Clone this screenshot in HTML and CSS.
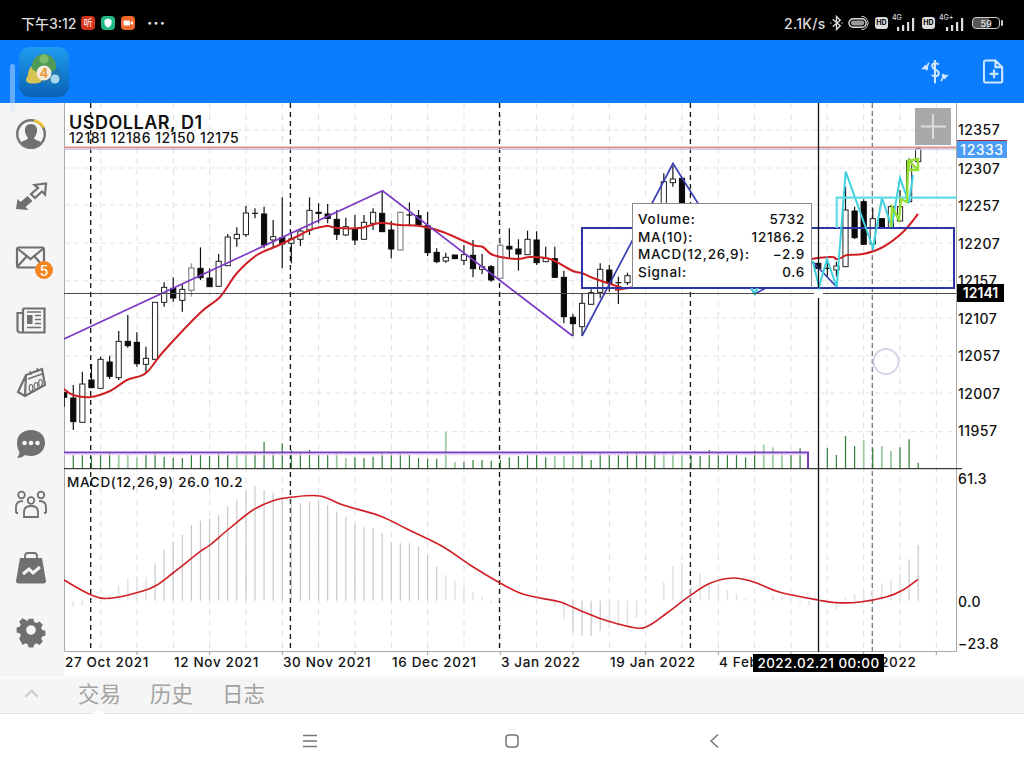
FILE: index.html
```html
<!DOCTYPE html>
<html lang="zh">
<head>
<meta charset="utf-8">
<title>USDOLLAR, D1</title>
<link rel="stylesheet" href="styles.css">
</head>
<body>
<div class="app">
  <header class="status">
    <div class="status-left">
      <span class="clock">下午3:12</span>
      <span class="app-dot dot-red">听</span>
      <span class="app-dot dot-green"><svg class="dot-glyph" viewBox="0 0 14 14"><path d="M7 2.500l3.500 1.500v3c0 2-1.500 3.500-3.500 4.500C5 10.500 3.500 9 3.500 7V4z"/></svg></span>
      <span class="app-dot dot-orange"><svg class="dot-glyph" viewBox="0 0 14 14"><rect x="2.500" y="4.500" width="6.500" height="5" rx="1"/><path d="M9.500 6.500l2.500-1.500v4l-2.500-1.500z"/></svg></span>
      <span class="more">···</span>
    </div>
    <div class="status-right">
      <span class="speed">2.1K/s</span>
      <svg class="st-bt" viewBox="0 0 14 16"><path class="st-line" d="M3 4l8 7-4 4V1l4 4-8 7M0.500 8h1M12.500 8h1"/></svg>
      <svg class="st-pill" viewBox="0 0 23 16"><rect class="st-line" x="1" y="3.500" width="18" height="9" rx="4.500"/><rect class="st-fill" x="3" y="5.500" width="14" height="5" rx="2.500"/><path class="st-thin" d="M14 1a7 7 0 0 1 0 14"/></svg>
      <span class="hd">HD</span>
      <span class="net"><span class="net-label">4G</span>
        <svg class="bars" viewBox="0 0 26 13"><rect x="6" y="9" width="2.200" height="4"/><rect x="11" y="7" width="2.200" height="6"/><rect x="16" y="4" width="2.200" height="9"/><rect x="21" y="0" width="2.200" height="13"/></svg></span>
      <span class="hd">HD</span>
      <span class="net net-wide"><span class="net-label">4G+</span>
        <svg class="bars" viewBox="0 0 30 13"><rect x="8" y="9" width="2.200" height="4"/><rect x="13" y="7" width="2.200" height="6"/><rect x="18" y="4" width="2.200" height="9"/><rect x="23" y="0" width="2.200" height="13"/></svg></span>
      <span class="battery"><span class="battery-val">59</span></span>
    </div>
  </header>

  <div class="toolbar">
    <svg class="logo" viewBox="0 0 50 50">
      <defs>
        <linearGradient id="logoBg" x1="0" y1="0" x2="0" y2="1"><stop offset="0" stop-color="#1e9bf0"/><stop offset="1" stop-color="#0a62b4"/></linearGradient>
      </defs>
      <rect width="50" height="50" rx="11" fill="url(#logoBg)"/>
      <path class="logo-blue" d="M30 18c7 0 12 5 12 11 0 5-5 8-11 8-5 0-9-2-11-5l6-12z"/>
      <circle class="logo-sky" cx="36" cy="32" r="4.500"/>
      <path class="logo-yellow" d="M19 16c-6 1-10 6-10 12-1 2-3 5-1 7 2 2 10 2 14 0l6-10z"/>
      <path class="logo-green" d="M25 7c8 0 13 7 12 15l-6 4H19l-6-4c-1-8 4-15 12-15z"/>
      <circle class="logo-lime" cx="25" cy="12" r="4.500"/>
      <circle class="logo-disc" cx="25" cy="26" r="7.500"/>
      <text class="logo-four" x="25" y="31">4</text>
    </svg>
    <div class="toolbar-actions">
      <svg class="tool-icon" viewBox="0 0 32 28">
        <path class="tool-line" d="M20 6c-2-2-7-2-7 1.500 0 4.500 7 3.500 7 8 0 3.500-5 3.700-7.500 1.700M16 1v25"/>
        <path class="tool-thin" d="M9.500 4c-2 2.500-2.500 4-2.500 8M22.500 24c2-2.500 2.500-4 2.500-8"/>
        <path class="tool-solid" d="M1 11l5-5 3 5zM31 17l-5 5-3-5z"/>
      </svg>
      <svg class="tool-icon doc" viewBox="0 0 22 26">
        <path class="tool-line" d="M2.500 1.500h10l7 7v14a2 2 0 0 1-2 2h-15a2 2 0 0 1-2-2v-19a2 2 0 0 1 2-2zM12.500 1.500v7h7M11 11v9M6.500 15.500h9"/>
      </svg>
    </div>
    <span class="scroll-ghost"></span>
  </div>

  <main class="main">
    <nav class="sidebar">
      <div class="side-cell"><svg class="side-icon" viewBox="0 0 36 36">
        <circle class="ic-ring" cx="18" cy="18" r="13.800"/><path class="ic-yellow" d="M21 4.500a14 14 0 0 1 9.500 7"/>
        <path class="ic-fill" d="M18 8c4.500 0 6.500 3.500 6 7.500-.4 3-1.800 5-3 6.500 0 1 2 2 5 3l2 1.500a13 13 0 0 1-20 0l2-1.500c3-1 5-2 5-3-1.200-1.500-2.600-3.500-3-6.500C11.500 11.500 13.500 8 18 8z"/></svg></div>
      <div class="side-cell"><svg class="side-icon" viewBox="0 0 36 36">
        <path class="ic-fill" d="M3 31l1.500-10 3 3 7-6 5 5-7 6 3 3z"/>
        <path class="ic-stroke" d="M18 16l7-6-3.500-3L33 5.500 32 16.500l-3-3-7 6.500z"/></svg></div>
      <div class="side-cell"><svg class="side-icon" viewBox="0 0 36 36">
        <rect class="ic-stroke" x="4" y="7.500" width="27" height="20" rx="2"/><path class="ic-stroke" d="M4.500 8.500L17.500 19 30.500 8.500M4.500 26.500l9-10M30.500 26.500l-9-10"/></svg>
        <span class="badge">5</span></div>
      <div class="side-cell"><svg class="side-icon" viewBox="0 0 36 36">
        <path class="ic-stroke" d="M10 6.500h21.500v24H7a2.500 2.500 0 0 1-2.500-2.500V11h5.500M10 6.500v24"/>
        <rect class="ic-fill" x="14" y="13" width="5.500" height="9"/><path class="ic-thin" d="M14 10h14M22 13.500h6M22 17.500h6M22 21.500h6M14 25.500h14"/></svg></div>
      <div class="side-cell"><svg class="side-icon" viewBox="0 0 36 36">
        <path class="ic-stroke" d="M5 28L13 11 29 5 32 21 12 32zM5 28l7 4M13 11l-1 21"/>
        <path class="ic-thin" d="M15 15l14-5"/>
        <ellipse class="ic-oval" cx="18" cy="24" rx="1.800" ry="3.500"/><ellipse class="ic-oval" cx="23" cy="22" rx="1.800" ry="3.500"/><ellipse class="ic-oval" cx="27.500" cy="19" rx="1.800" ry="3.500"/>
        <path class="ic-thin" d="M17 7l1 4M24 4l1 4"/></svg></div>
      <div class="side-cell"><svg class="side-icon" viewBox="0 0 36 36">
        <path class="ic-fill" d="M18 4c8 0 14 5 14 13 0 7-6 13-14 13-2 0-4-.3-6-1-2 2-4.500 3-8 3 1.500-2 2.500-4 2.500-6C5 24 4 21 4 17 4 9 10 4 18 4z"/>
        <circle class="ic-dot" cx="11.500" cy="17" r="2.300"/><circle class="ic-dot" cx="18" cy="17" r="2.300"/><circle class="ic-dot" cx="24.500" cy="17" r="2.300"/></svg></div>
      <div class="side-cell"><svg class="side-icon" viewBox="0 0 36 36">
        <circle class="ic-thin2" cx="8.500" cy="7" r="3.300"/><circle class="ic-thin2" cx="28" cy="7" r="3.300"/><circle class="ic-thin2" cx="18" cy="12.500" r="3.300"/>
        <path class="ic-thin2" d="M3 25v-6c0-4 2-6 7-6M33 25v-6c0-4-2-6-7-6M3 25h2M33 25h-2M11 29v-5c0-4 3-6 7-6s7 2 7 6v5z"/></svg></div>
      <div class="side-cell"><svg class="side-icon" viewBox="0 0 36 36">
        <path class="ic-thin2" d="M12 10V6c0-2 1-3 3-3h6c2 0 3 1 3 3v4M12 10v3M24 10v3"/>
        <path class="ic-fill" d="M7 8h22l4 23c.2 1.500-1 2.500-2.500 2.500h-25C4 33.500 2.800 32.500 3 31z"/>
        <path class="ic-white" d="M10 24l6-5 4 4 7-6"/></svg></div>
      <div class="side-cell"><svg class="side-icon" viewBox="0 0 36 36">
        <path class="ic-fill" fill-rule="evenodd" d="M15 4h6l1 4 3 1.300 3.600-2 4.200 4.200-2 3.500 1.200 3 4 1v6l-4 1-1.200 3 2 3.500-4.200 4.200-3.600-2-3 1.300-1 4h-6l-1-4-3-1.300-3.600 2L3.200 28.500l2-3.500-1.200-3-4-1v-6l4-1 1.200-3-2-3.500L7.400 3.300l3.600 2 3 1.300zM18 12a6 6 0 1 0 0 12 6 6 0 0 0 0-12z" transform="translate(3.600 3.600) scale(.8)"/></svg></div>
    </nav>

    <section class="chart">
      <svg class="plot" viewBox="64 103 960 573" width="960" height="573">
        <g id="grid"></g>
        <path class="sep" d="M64.500 103V651.500H956.500V103"/>
        <path class="sep-dark" d="M64 468.700H962"/>
        <g id="tick-marks"></g>
        <g id="volume"></g>
        <g id="histogram"></g>
        <g id="candles"></g>
        <path id="ma-line" class="ma"/>
        <polyline class="zig-purple" points="64,339 382.500,190.700 572.700,336"/>
        <polyline class="zig-blue" points="582,336 673,163.500 754.700,294 813,262 836.700,287"/>
        <rect class="box-blue" x="582" y="228" width="372" height="60"/>
        <polyline class="zig-cyan" points="751,287 754.700,294 758,287 813,262 819,287 827,259 836.700,287 845.700,171.700 873,248 882,198 891.700,227 900,178 909,203 913,175"/>
        <path class="box-cyan" d="M957 197.700H836.700V228"/>
        <path class="zig-green" d="M891 227L892 207 899 220 901 199 907 202 908 161 918 159 918 170 909 170 909 161 918 170"/>
        <path class="vol-box" d="M64 452.500H808V468"/>
        <path class="vol-box-glow" d="M64 454.500H806"/>
        <path id="macd-line" class="macd"/>
        <path class="ask-glow" d="M64 149.500H956"/>
        <path class="ask" d="M64 147.500H956"/>
        <path class="cross-h" d="M64 293.500H814M823 293.500H956"/>
        <path class="cross-v" d="M818.500 103V288M818.500 298V652"/>
        <circle class="touch" cx="886" cy="361.500" r="12.500"/>

        <text class="title" x="69" y="129">USDOLLAR, D1</text>
        <text class="ohlc" x="69" y="143">12181 12186 12150 12175</text>
        <text class="macd-label" x="67" y="487">MACD(12,26,9) 26.0 10.2</text>
        <text class="axis-y" x="958" y="135">12357</text>
        <text class="axis-y" x="958" y="174">12307</text>
        <text class="axis-y" x="958" y="211">12257</text>
        <text class="axis-y" x="958" y="249">12207</text>
        <text class="axis-y" x="958" y="286">12157</text>
        <text class="axis-y" x="958" y="324">12107</text>
        <text class="axis-y" x="958" y="361">12057</text>
        <text class="axis-y" x="958" y="399">12007</text>
        <text class="axis-y" x="958" y="436">11957</text>
        <text class="axis-y" x="958" y="484">61.3</text>
        <text class="axis-y" x="958" y="607">0.0</text>
        <text class="axis-y" x="958" y="649">−23.8</text>
        <text class="axis-x" x="65" y="667">27 Oct 2021</text>
        <text class="axis-x" x="174" y="667">12 Nov 2021</text>
        <text class="axis-x" x="283" y="667">30 Nov 2021</text>
        <text class="axis-x" x="392" y="667">16 Dec 2021</text>
        <text class="axis-x" x="501" y="667">3 Jan 2022</text>
        <text class="axis-x" x="610" y="667">19 Jan 2022</text>
        <text class="axis-x" x="719" y="667">4 Feb 2022</text>
        <text class="axis-x" x="828" y="667">22 Feb 2022</text>
      </svg>

      <div class="zoom-btn"><svg class="zoom-plus" viewBox="0 0 36 37"><path d="M18 6v25M6 18.500h25"/></svg></div>
      <div class="price-tag tag-ask">12333</div>
      <div class="price-tag tag-cross">12141</div>
      <div class="time-tag">2022.02.21 00:00</div>
      <div class="tooltip">
        <div class="tip-row"><span>Volume:</span><span>5732</span></div>
        <div class="tip-row"><span>MA(10):</span><span>12186.2</span></div>
        <div class="tip-row"><span>MACD(12,26,9):</span><span>−2.9</span></div>
        <div class="tip-row"><span>Signal:</span><span>0.6</span></div>
      </div>
    </section>
  </main>

  <div class="tabs">
    <svg class="chev" viewBox="0 0 16 9"><path d="M1.500 8L8 1.500 14.500 8"/></svg>
    <span class="tab">交易</span>
    <span class="tab">历史</span>
    <span class="tab">日志</span>
    <span class="tab-notch"></span>
  </div>

  <footer class="navbar">
    <svg class="nav-icon" viewBox="0 0 14 14"><path d="M0 1.500h14M0 7h14M0 12.500h14"/></svg>
    <svg class="nav-icon" viewBox="0 0 14 14"><rect x="1" y="1" width="12" height="12" rx="3"/></svg>
    <svg class="nav-icon" viewBox="0 0 14 14"><path d="M11 0.500L4 7l7 6.500"/></svg>
  </footer>
</div>
<script src="chart.js"></script>
</body>
</html>
```
FILE: styles.css
```css
* { box-sizing: border-box; }
html, body { margin: 0; padding: 0; }
body { width: 1024px; height: 768px; overflow: hidden; background: #fff; font-family: Inter, "Noto Sans CJK SC", sans-serif; }
.app { display: flex; flex-direction: column; width: 1024px; height: 768px; }

/* status bar */
.status { height: 40px; background: #000; display: flex; justify-content: space-between; align-items: center; padding: 6px 24px 0 21px; color: #ddd; }
.status-left, .status-right { display: flex; align-items: center; }
.clock { font: 500 14px Inter, "Noto Sans CJK SC", sans-serif; width: 60px; white-space: nowrap; }
.app-dot { width: 14px; height: 14px; border-radius: 4px; margin-right: 6px; font: 9px "Noto Sans CJK SC", sans-serif; color: #fff; text-align: center; line-height: 14px; }
.dot-red { background: #d8341c; }
.dot-green { background: #22b98a; }
.dot-orange { background: #f0692e; }
.dot-glyph { display: block; width: 14px; height: 14px; fill: #fff; }
.more { margin-left: 6px; font: 700 16px Inter, sans-serif; letter-spacing: 1px; color: #eee; }
.speed { width: 42px; margin-right: 4px; font: 500 14px Inter, sans-serif; letter-spacing: .3px; white-space: nowrap; }
.st-bt { width: 13px; height: 16px; margin-right: 5px; }
.st-pill { width: 22px; height: 16px; margin-right: 5px; }
.st-line { fill: none; stroke: #ddd; stroke-width: 1.500; }
.st-thin { fill: none; stroke: #ddd; stroke-width: 1; }
.st-fill { fill: #999; }
.hd { width: 13px; height: 12px; border-radius: 3px; background: #ddd; color: #000; font: 700 7px Inter, sans-serif; line-height: 12px; text-align: center; margin-right: 3px; }
.net { position: relative; width: 26px; height: 16px; display: flex; align-items: flex-end; justify-content: flex-end; margin-right: 5px; }
.net-wide { width: 30px; margin-right: 4px; }
.net-label { position: absolute; left: 1px; top: -2px; font: 500 7px Inter, sans-serif; color: #ddd; }
.bars { width: 26px; height: 13px; fill: #ddd; }
.net-wide .bars { width: 30px; }
.battery { width: 28px; height: 12px; border: 1px solid #ccc; border-radius: 4px; display: flex; align-items: center; justify-content: center; position: relative; background: linear-gradient(90deg, #555 60%, #000 60%); }
.battery::after { content: ""; position: absolute; right: -4px; top: 2px; width: 2px; height: 6px; background: #ccc; border-radius: 1px; }
.battery-val { font: 500 9px Inter, sans-serif; color: #eee; }

/* toolbar */
.toolbar { height: 63px; background: #0a7cff; display: flex; align-items: center; justify-content: space-between; padding: 0 19px; position: relative; flex: none; }
.logo { width: 50px; height: 50px; }
.logo-blue { fill: #1f78b4; }
.logo-sky { fill: #a6d8ee; }
.logo-yellow { fill: #d8c452; }
.logo-green { fill: #4f9a55; }
.logo-lime { fill: #7fbd6a; }
.logo-disc { fill: #f5eadf; }
.logo-four { font: 700 13px Inter, sans-serif; fill: #e89a3a; text-anchor: middle; }
.toolbar-actions { display: flex; align-items: center; gap: 33px; margin-right: 0; }
.tool-icon { width: 30px; height: 26px; }
.tool-icon.doc { width: 22px; height: 25px; }
.tool-line { fill: none; stroke: #cfe6ff; stroke-width: 2.200; }
.tool-thin { fill: none; stroke: #cfe6ff; stroke-width: 2; }
.tool-solid { fill: #cfe6ff; }
.scroll-ghost { position: absolute; left: 10px; top: 24px; width: 5px; height: 49px; border-radius: 3px; background: rgba(215, 230, 250, .45); }

/* main */
.main { height: 573px; display: flex; flex: none; }
.sidebar { width: 64px; background: #f5f5f5; flex: none; display: flex; flex-direction: column; }
.side-cell { height: 62px; display: flex; align-items: center; justify-content: center; position: relative; flex: none; padding-right: 2px; }
.side-icon { width: 36px; height: 36px; }
.ic-ring { fill: none; stroke: #777; stroke-width: 2.500; }
.ic-yellow { fill: none; stroke: #f4c534; stroke-width: 2.500; }
.ic-fill { fill: #707070; }
.ic-stroke { fill: none; stroke: #707070; stroke-width: 2.200; }
.ic-thin { fill: none; stroke: #707070; stroke-width: 1.500; }
.ic-thin2 { fill: none; stroke: #707070; stroke-width: 1.800; }
.ic-oval { fill: none; stroke: #707070; stroke-width: 1.200; }
.ic-dot { fill: #f5f5f5; }
.ic-white { fill: none; stroke: #f5f5f5; stroke-width: 3; }
.badge { position: absolute; left: 35px; top: 34px; width: 18px; height: 18px; border-radius: 50%; background: #f5841f; color: #fff; font: 500 14px Inter, sans-serif; line-height: 19px; text-align: center; }

/* chart */
.chart { position: relative; width: 960px; background: #fff; flex: none; overflow: hidden; }
.plot { display: block; }
.grid-line { stroke: #e4e4e4; stroke-width: 1; stroke-dasharray: 5 4; }
.grid-v { stroke: #e0e0e0; stroke-dasharray: 6 5; }
.period { stroke: #111; stroke-width: 1.300; stroke-dasharray: 5 4; }
.period-soft { stroke: #777; stroke-width: 1.300; stroke-dasharray: 5 3; }
.sep { fill: none; stroke: #aaa; stroke-width: 1; }
.sep-dark { stroke: #3c3c3c; stroke-width: 1.200; }
.tick { stroke: #9a9a9a; stroke-width: 1; }
.vol { stroke: #2f7f3a; stroke-width: 1.200; }
.vol-soft { stroke: #9ecba0; stroke-width: 1.800; }
.hist { stroke: #c8c8c8; stroke-width: 1.200; }
.hist-soft { stroke: #e2e2e2; stroke-width: 1.500; }
.wick { stroke: #111; stroke-width: 1.200; }
.wick-soft { stroke: #999; stroke-width: 1.400; }
.body-black { fill: #0a0a0a; stroke: #0a0a0a; stroke-width: 1; }
.body-white { fill: #fff; stroke: #222; stroke-width: 1; }
.body-soft { fill: #fff; stroke: #888; stroke-width: 1.200; }
.ma { fill: none; stroke: #d01f24; stroke-width: 2; stroke-linejoin: round; }
.macd { fill: none; stroke: #d01f24; stroke-width: 1.600; stroke-linejoin: round; }
.zig-purple { fill: none; stroke: #7d3cc8; stroke-width: 1.700; }
.zig-blue { fill: none; stroke: #3b3fb5; stroke-width: 1.700; }
.box-blue { fill: none; stroke: #2c35a6; stroke-width: 2; }
.zig-cyan { fill: none; stroke: #3fd0e0; stroke-width: 2; }
.box-cyan { fill: none; stroke: #62dbe6; stroke-width: 2.200; }
.zig-green { fill: none; stroke: #93e032; stroke-width: 2.400; }
.vol-box { fill: none; stroke: #7a3fbe; stroke-width: 2; }
.vol-box-glow { fill: none; stroke: #eed9f7; stroke-width: 1.500; }
.ask { stroke: #d98f8f; stroke-width: 1.800; }
.ask-glow { stroke: #bcd8f2; stroke-width: 1; }
.cross-h { fill: none; stroke: #4a4a4a; stroke-width: 1; }
.cross-v { fill: none; stroke: #111; stroke-width: 1.300; }
.touch { fill: rgba(255, 255, 255, .4); stroke: #d2d6ea; stroke-width: 2; }
.title { font: 600 18px Inter, sans-serif; letter-spacing: .5px; fill: #111; }
.ohlc { font: 500 14px Inter, sans-serif; letter-spacing: .5px; fill: #111; }
.macd-label { font: 500 13.500px Inter, sans-serif; letter-spacing: .7px; fill: #111; }
.axis-y { font: 500 14px Inter, sans-serif; letter-spacing: .45px; fill: #111; }
.axis-x { font: 500 13.500px Inter, sans-serif; letter-spacing: .65px; fill: #111; }

.zoom-btn { position: absolute; left: 851px; top: 5px; width: 36px; height: 37px; background: #a9a9a9; }
.zoom-plus { display: block; width: 36px; height: 37px; fill: none; stroke: #ddd; stroke-width: 2; }
.price-tag { position: absolute; height: 18px; font: 500 14px/18px Inter, sans-serif; letter-spacing: .5px; color: #fff; text-align: center; }
.tag-ask { left: 893px; top: 37px; width: 50px; background: #4c9df5; border-top: 1px solid #9a3040; line-height: 17px; }
.tag-cross { left: 893px; top: 181px; width: 47px; background: #000; font-weight: 600; letter-spacing: 0; }
.time-tag { position: absolute; left: 689px; top: 551px; width: 131px; height: 18px; background: #000; color: #fff; font: 500 13.500px/18px Inter, sans-serif; letter-spacing: .45px; text-align: center; white-space: nowrap; }
.tooltip { position: absolute; left: 568px; top: 100px; width: 180px; height: 85px; background: #fff; border: 1px solid #8a8a8a; border-bottom: 1px solid #2c35a6; padding: 7px 6px 0 5px; display: flex; flex-direction: column; }
.tip-row { display: flex; justify-content: space-between; height: 17.700px; font: 500 13.500px/17.700px Inter, sans-serif; letter-spacing: .7px; color: #111; white-space: nowrap; }

/* tabs */
.tabs { height: 38px; background: #f5f5f5; border-top: 3px solid #fbfbfb; border-bottom: 1px solid #e4e4e4; display: flex; align-items: center; position: relative; padding: 0 0 6px 24px; flex: none; }
.chev { width: 15px; height: 9px; fill: none; stroke: #c8c8c8; stroke-width: 2; margin-right: 39px; }
.tab { font: 400 21.500px "Noto Sans CJK SC", sans-serif; color: #a2a2a2; margin-right: 29px; line-height: 1; white-space: nowrap; }
.tab-notch { position: absolute; left: 92px; bottom: -1px; width: 0; height: 0; border-left: 6px solid transparent; border-right: 6px solid transparent; border-bottom: 5px solid #fff; }

/* navigation */
.navbar { height: 54px; background: #fff; display: flex; align-items: center; justify-content: space-between; padding: 0 303px; flex: none; }
.nav-icon { width: 14px; height: 14px; fill: none; stroke: #777; stroke-width: 1.500; }
```
FILE: chart.js
```js
var NS = 'http://www.w3.org/2000/svg';
function add(parent, tag, cls, attrs) {
  var el = document.createElementNS(NS, tag);
  el.setAttribute('class', cls);
  for (var k in attrs) el.setAttribute(k, attrs[k]);
  document.getElementById(parent).appendChild(el);
}
function cx(i) { return 64.2 + 9.085 * i; }
function smooth(p) {
  var d = 'M' + p[0][0] + ' ' + p[0][1];
  for (var i = 0; i < p.length - 1; i++) {
    var a = p[Math.max(i - 1, 0)], b = p[i], c = p[i + 1], e = p[Math.min(i + 2, p.length - 1)];
    d += 'C' + (b[0] + (c[0] - a[0]) / 6).toFixed(1) + ' ' + (b[1] + (c[1] - a[1]) / 6).toFixed(1) + ' ' +
      (c[0] - (e[0] - b[0]) / 6).toFixed(1) + ' ' + (c[1] - (e[1] - b[1]) / 6).toFixed(1) + ' ' + c[0] + ' ' + c[1];
  }
  return d;
}

/* grid */
[130, 168, 205, 243, 280.7, 318, 355.7, 393, 431.7].forEach(function (y) {
  add('grid', 'line', 'grid-line', { x1: 65, x2: 956, y1: y, y2: y });
});
for (var k = 0; k < 24; k++) {
  var gx = 100.7 + 36.33 * k;
  add('grid', 'line', 'grid-line grid-v', { x1: gx, x2: gx, y1: 103, y2: 651 });
  if (k % 2 === 1) add('tick-marks', 'line', 'tick', { x1: gx, x2: gx, y1: 651, y2: 655 });
}
[90.7, 290.4, 499.5, 690.4].forEach(function (x) {
  add('grid', 'line', 'period', { x1: x, x2: x, y1: 103, y2: 652 });
});
add('grid', 'line', 'period-soft', { x1: 872.3, x2: 872.3, y1: 103, y2: 652 });

/* volume bars: tops, from bar 1 */
var vol = [75,75,80,75,68,75,72,82,75,68,80,84,84,75,75,78,68,72,68,66,68,36,68,40,60,66,60,75,75,68,84,82,84,80,68,68,70,75,84,86,86,6,96,95,90,90,92,90,82,78,75,75,82,78,78,78,68,90,68,75,75,68,68,68,68,68,68,72,78,78,60,68,75,75,82,62,44,52,70,72,55,null,null,54,75,18,48,30,55,48,63,52,28,98];
var softVol = { 6:1,7:1,8:1,19:1,20:1,31:1,30:1,42:1,43:1,54:1,55:1,56:1,66:1,67:1,68:1,77:1,78:1,79:1,88:1,90:1,91:1 };
vol.forEach(function (p, n) {
  if (p === null) return;
  var i = n + 1, x = cx(i);
  add('volume', 'line', softVol[i] ? 'vol-soft' : 'vol', { x1: x, x2: x, y1: 430 + p / 3, y2: 468 });
});

/* MACD histogram: tops, from bar 1 */
var hist = [530,525,510,508,495,465,445,445,442,400,360,335,315,285,272,265,255,228,208,183,168,180,188,200,205,220,215,215,225,245,260,282,292,295,310,337,340,340,350,375,410,435,452,465,487,500,520,505,510,510,510,510,512,530,568,605,617,618,603,595,590,585,565,515,512,457,408,397,470,430,460,462,480,490,502,512,510,495,500,510,518,525,510,515,538,503,492,480,478,460,450,430,388,345];
hist.forEach(function (p, n) {
  var i = n + 1, x = cx(i), y = 430 + p / 3;
  var soft = Math.abs(y - 600.7) < 30 || i >= 65 && i <= 92;
  add('histogram', 'line', soft ? 'hist-soft' : 'hist', { x1: x, x2: x, y1: y, y2: 600.7 });
});

/* moving averages */
document.getElementById('ma-line').setAttribute('d', smooth([
  [64,389],[73,395],[91,397],[110,391],[127,380],[146,373],[163,352],[200,313],[220,297],[237,273],[257,255],[277,246],[300,235],[310,230],[327,226],[337,228],[360,228],[380,223],[400,225],[420,226],[443,232],[473,245],[483,247],[493,255],[517,259],[530,257],[550,259],[573,271],[582,273],[593,278],[620,287],[632,287.5],[811,259],[837,259],[847,255],[863,254],[883,247],[903,232],[918,214]
]));
document.getElementById('macd-line').setAttribute('d', smooth([
  [64,580],[90.7,594.7],[110,598.3],[143,591],[157,585],[173,573],[200,551.7],[210,545],[230,528],[253,510],[273,500.7],[293,497],[320,496],[343,505],[380,516],[407,529],[443,546.7],[470,565],[500,583],[520,593],[540,598],[560,602],[583,611.7],[607,620.7],[637,628],[650,625],[667,613],[690,595.7],[710,583.3],[733,578],[753,581.7],[780,592.3],[818,600],[837,602.7],[860,602],[887,596.7],[903,590],[918,579.3]
]));

/* candles: [bar, high, low, top, bottom, black] in page pixels */
function z4(i, h, l, t, b, k) { return [i, 180 + h / 3, 180 + l / 3, 180 + t / 3, 180 + b / 3, k]; }
function z5(i, h, l, t, b, k) { return [i, 160 + h / 3, 160 + l / 3, 160 + t / 3, 160 + b / 3, k]; }
function z6(i, h, l, t, b, k) { return [i, 140 + h / 3, 140 + l / 3, 140 + t / 3, 140 + b / 3, k]; }
var candles = [
  z4(0,638,680,638,652,1), z4(1,615,750,654,725,1), z4(2,575,727,612,727,0), z4(3,552,623,600,623,1),
  z4(4,530,625,538,625,0), z4(5,527,597,546,589,1), z4(6,453,600,484,593,0), z4(7,405,503,484,497,1),
  z4(8,457,560,487,551,1), z4(9,500,580,535,553,0), z4(10,367,538,367,538,0), z4(11,307,380,322,367,0),
  z4(12,292,365,325,354,1), z4(13,312,395,328,361,0), z4(14,250,350,264,331,0), z4(15,202,300,265,293,1),
  z4(16,265,320,294,320,1), z4(17,222,319,244,319,0), z4(18,162,257,171,257,0), z4(19,142,200,163,176,0),
  z4(20,78,170,99,164,0), z4(21,85,115,100,100,1), z4(22,80,205,102,195,1), z4(23,120,205,170,180,0),
  z4(24,52,265,173,192,1), z4(25,155,250,177,190,0), z4(26,145,198,153,178,0), z4(27,52,165,91,150,0),
  z4(28,70,130,97,100,1), z4(29,72,130,102,115,1), z4(30,90,180,118,163,1), z4(31,113,168,140,165,0),
  z4(32,105,195,148,180,1),
  z5(33,165,238,187,238,0), z5(34,145,210,157,190,0), z5(35,92,215,160,215,1), z5(36,182,295,210,267,1),
  z5(37,155,272,157,270,0), z5(38,127,195,165,165,1), z5(39,150,200,167,195,1), z5(40,155,288,197,278,1),
  z5(41,265,310,277,305,1), z5(42,278,308,292,303,0), z5(43,285,296,285,296,1), z5(44,255,315,284,301,0),
  z5(45,240,352,286,326,1), z5(46,282,342,320,328,0), z5(47,315,365,320,360,1), z5(48,232,355,256,355,0),
  z5(49,205,293,259,267,1), z5(50,238,332,267,282,1), z5(51,212,284,238,284,0), z5(52,214,315,240,308,1),
  z5(53,260,305,295,305,0), z5(54,260,352,296,352,1), z5(55,332,490,352,470,1), z5(56,462,528,472,491,1),
  z5(57,402,528,430,500,0), z5(58,388,433,398,433,0), z5(59,310,415,328,397,0), z5(60,315,395,330,370,1),
  z5(61,350,432,368,368,1), z5(62,338,375,347,368,0),
  z6(66,100,230,125,230,0), z6(67,78,140,117,128,0), z6(68,110,240,115,240,1),
  z6(83,370,385,370,385,1), z6(84,360,410,385,385,1), z6(85,365,410,378,390,0),
  z6(86,140,380,210,380,0), z6(87,200,297,213,293,1), z6(88,178,313,185,313,1), z6(89,205,312,236,312,0),
  z6(90,236,263,236,263,1), z6(91,195,262,200,262,0), z6(92,150,243,200,243,0), z6(93,55,185,62,185,0),
  z6(94,20,65,27,65,0)
];
var softCandle = { 14:1, 37:1, 48:1 };
candles.forEach(function (c) {
  var x = cx(c[0]), soft = softCandle[c[0]];
  add('candles', 'line', soft ? 'wick-soft' : 'wick', { x1: x, x2: x, y1: c[1], y2: c[2] });
  if (c[4] - c[3] < 1) {
    add('candles', 'line', 'wick', { x1: x - 3, x2: x + 3, y1: c[3], y2: c[3] });
  } else {
    add('candles', 'rect', c[5] ? 'body-black' : (soft ? 'body-soft' : 'body-white'),
      { x: x - 2.6, y: c[3], width: 5.2, height: c[4] - c[3] });
  }
});
```
